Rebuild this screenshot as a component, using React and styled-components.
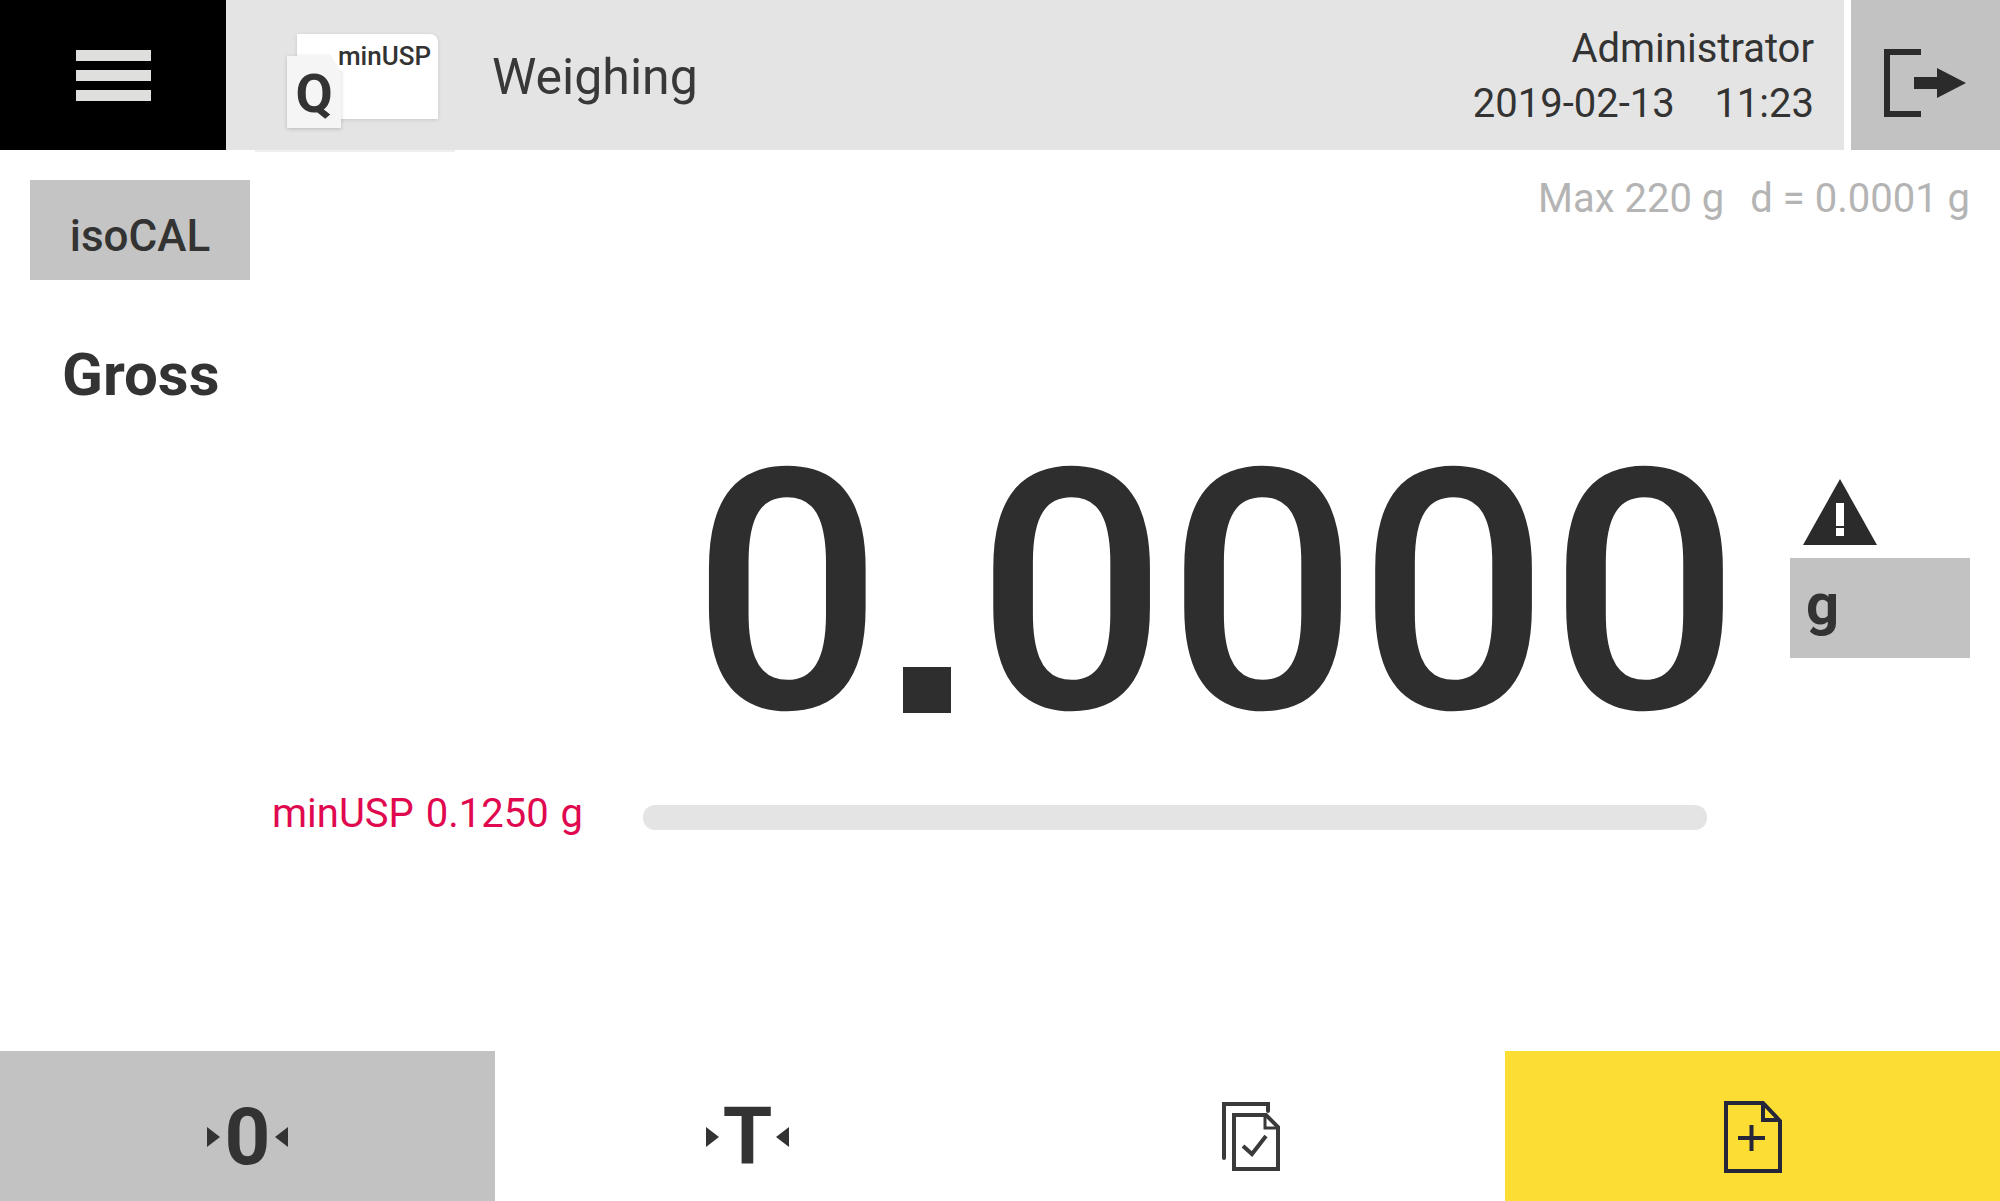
import styled, { createGlobalStyle } from "styled-components";

const GlobalStyle = createGlobalStyle`
  html, body {
    margin: 0;
    padding: 0;
    background: #fff;
    font-family: Roboto, "Liberation Sans", sans-serif;
    color: #2e2e2e;
  }
`;

const Page = styled.div`
  width: 2000px;
  height: 1201px;
  display: flex;
  flex-direction: column;
  overflow: hidden;
  background: #fff;
`;

/* header */
const Header = styled.header`
  height: 150px;
  flex: none;
  display: flex;
`;

const MenuButton = styled.div`
  width: 226px;
  background: #000;
  display: flex;
  flex-direction: column;
  align-items: center;
  justify-content: center;
  gap: 9px;
`;

const MenuBar = styled.span`
  width: 75px;
  height: 11px;
  background: #dfe0de;
`;

const TitleBar = styled.div`
  position: relative;
  flex: 1;
  background: #e4e4e4;
  display: flex;
  align-items: center;
  padding: 0 30px 0 60px;

  &::after {
    content: "";
    position: absolute;
    left: 29px;
    bottom: -2px;
    width: 200px;
    height: 2px;
    background: #efefef;
  }
`;

const LogoCard = styled.div`
  position: relative;
  width: 141px;
  height: 85px;
  margin: 2px 0 0 11px;
  box-sizing: border-box;
  padding: 7px 7px 0 0;
  background: #fff;
  border-radius: 0 8px 0 0;
  box-shadow: 0 1px 4px rgba(0, 0, 0, 0.12);
  text-align: right;
  font-size: 26px;
  font-weight: 500;
  line-height: 30px;
  color: #333;
`;

const LogoDoc = styled.div`
  position: absolute;
  left: -10px;
  top: 22px;
  width: 54px;
  height: 72px;
  background: #f5f5f5;
  box-shadow: 0 1px 4px rgba(0, 0, 0, 0.18);
  clip-path: polygon(0 -10%, 72% -10%, 100% 22%, 120% 22%, 120% 120%, -20% 120%, -20% -10%);
  display: flex;
  justify-content: center;
  font-size: 54px;
  font-weight: 700;
  line-height: 76px;
  text-align: center;
`;

const Title = styled.div`
  margin: 3px 0 0 54px;
  font-size: 50px;
  color: #383838;
`;

const UserInfo = styled.div`
  margin-left: auto;
  text-align: right;
  font-size: 40px;
  line-height: 55px;
  color: #333;
  white-space: pre;
  margin-top: 1px;
`;

const LogoutButton = styled.div`
  width: 149px;
  margin-left: 7px;
  box-sizing: border-box;
  padding: 16px 1px 0 0;
  background: #c2c2c2;
  display: flex;
  align-items: center;
  justify-content: center;
`;

/* main part */
const Main = styled.main`
  flex: 1;
  display: flex;
  flex-direction: column;
  padding: 30px 30px 0 30px;
`;

const TopRow = styled.div`
  display: flex;
  justify-content: space-between;
  align-items: flex-start;
`;

const IsoCal = styled.div`
  width: 220px;
  height: 100px;
  background: #c4c4c4;
  display: flex;
  align-items: center;
  justify-content: center;
  padding-top: 12px;
  box-sizing: border-box;
  font-size: 44px;
  font-weight: 500;
  color: #333;
`;

const Capacity = styled.div`
  display: flex;
  gap: 26px;
  font-size: 40px;
  line-height: 40px;
  margin-top: -1px;
  color: #b4b4b4;
`;

const Mode = styled.div`
  margin: 62px 0 0 32px;
  font-size: 60px;
  line-height: 66px;
  font-weight: 700;
  color: #333;
`;

const Readout = styled.div`
  display: flex;
  justify-content: flex-end;
  margin-top: 35px;
  height: 300px;
`;

const Value = styled.div`
  font-size: 336px;
  line-height: 300px;
  font-weight: 500;
  color: #2e2e2e;
`;

const Period = styled.span`
  position: relative;
  color: transparent;

  &::after {
    content: "";
    position: absolute;
    left: 20px;
    bottom: 77px;
    width: 48px;
    height: 46px;
    background: #2e2e2e;
  }
`;

const UnitColumn = styled.div`
  width: 180px;
  margin-left: 50px;
  display: flex;
  flex-direction: column;
  padding-top: 36px;
`;

const WarnIcon = styled.svg`
  width: 74px;
  height: 66px;
  margin-left: 13px;
`;

const UnitBox = styled.div`
  margin-top: 13px;
  height: 100px;
  background: #c2c2c2;
  padding-left: 16px;
  font-size: 58px;
  line-height: 92px;
  font-weight: 700;
  color: #333;
`;

const ScaleRow = styled.div`
  display: flex;
  align-items: center;
  margin-top: 49px;
  padding-left: 242px;
`;

const ScaleLabel = styled.div`
  width: 371px;
  margin-top: -2px;
  font-size: 40px;
  word-spacing: 2px;
  color: #e0094f;
`;

const ScaleTrack = styled.div`
  width: 1064px;
  height: 25px;
  margin-top: 5px;
  border-radius: 12px;
  background: #e4e4e4;
`;

/* bottom buttons */
const Footer = styled.footer`
  height: 150px;
  flex: none;
  display: grid;
  grid-template-columns: 495px 505px 505px 495px;
`;

const FooterButton = styled.div`
  display: flex;
  align-items: center;
  justify-content: center;
  box-sizing: border-box;
  padding: 22px ${(p) => p.$shift || 0}px 0 0;
  background: ${(p) => p.$bg || "transparent"};
`;

const TareGlyph = styled.div`
  display: flex;
  align-items: center;
  gap: ${(p) => p.$gap || 6}px;
  font-size: 80px;
  line-height: 80px;
  font-weight: 700;
  color: #333;
`;

const TareLetter = styled.span`
  display: block;
`;

const Pointer = styled.svg`
  width: 13px;
  height: 20px;
  flex: none;
`;

function TareIcon({ children, gap }) {
  return (
    <TareGlyph $gap={gap}>
      <Pointer viewBox="0 0 13 20">
        <path d="M0 0L13 10L0 20Z" fill="#333" />
      </Pointer>
      <TareLetter>{children}</TareLetter>
      <Pointer viewBox="0 0 13 20">
        <path d="M13 0L0 10L13 20Z" fill="#333" />
      </Pointer>
    </TareGlyph>
  );
}

export default function App() {
  return (
    <Page>
      <GlobalStyle />
      <Header>
        <MenuButton>
          <MenuBar />
          <MenuBar />
          <MenuBar />
        </MenuButton>
        <TitleBar>
          <LogoCard>
            minUSP
            <LogoDoc>Q</LogoDoc>
          </LogoCard>
          <Title>Weighing</Title>
          <UserInfo>
            Administrator
            <br />
            {"2019-02-13    11:23"}
          </UserInfo>
        </TitleBar>
        <LogoutButton>
          <svg width="82" height="68" viewBox="0 0 82 68">
            <path d="M37 3H3V65H37" fill="none" stroke="#2b2b2b" strokeWidth="6" />
            <path d="M30 28H53V19L82 34L53 49V40H30Z" fill="#2b2b2b" />
          </svg>
        </LogoutButton>
      </Header>

      <Main>
        <TopRow>
          <IsoCal>isoCAL</IsoCal>
          <Capacity>
            <span>Max 220 g</span>
            <span>d = 0.0001 g</span>
          </Capacity>
        </TopRow>
        <Mode>Gross</Mode>
        <Readout>
          <Value>
            0<Period>.</Period>0000
          </Value>
          <UnitColumn>
            <WarnIcon viewBox="0 0 74 66">
              <path d="M37 0L74 66H0Z" fill="#2b2b2b" />
              <rect x="33" y="24" width="8" height="23" fill="#fff" />
              <rect x="33" y="49" width="8" height="8" fill="#fff" />
            </WarnIcon>
            <UnitBox>g</UnitBox>
          </UnitColumn>
        </Readout>
        <ScaleRow>
          <ScaleLabel>minUSP 0.1250 g</ScaleLabel>
          <ScaleTrack />
        </ScaleRow>
      </Main>

      <Footer>
        <FooterButton $bg="#c2c2c2">
          <TareIcon gap={5}>0</TareIcon>
        </FooterButton>
        <FooterButton>
          <TareIcon gap={4}>T</TareIcon>
        </FooterButton>
        <FooterButton $shift={4}>
          <svg width="58" height="70" viewBox="0 0 58 70">
            <path d="M2 56V2H46V9" fill="none" stroke="#3a3a3a" strokeWidth="4" strokeLinecap="round" />
            <path d="M12 13H44L56 25V67H12Z" fill="none" stroke="#3a3a3a" strokeWidth="4" />
            <path d="M43 13V26H56" fill="none" stroke="#3a3a3a" strokeWidth="3" />
            <path d="M21 44L30 52L44 34" fill="none" stroke="#3a3a3a" strokeWidth="4" />
          </svg>
        </FooterButton>
        <FooterButton $bg="#fcdd33">
          <svg width="58" height="72" viewBox="0 0 58 72">
            <path d="M2 2H39L56 20V70H2Z" fill="none" stroke="#26263a" strokeWidth="4" />
            <path d="M39 2V19H56" fill="none" stroke="#26263a" strokeWidth="4" />
            <path d="M14 37H41M27.500 24V50" fill="none" stroke="#26263a" strokeWidth="4" />
          </svg>
        </FooterButton>
      </Footer>
    </Page>
  );
}
